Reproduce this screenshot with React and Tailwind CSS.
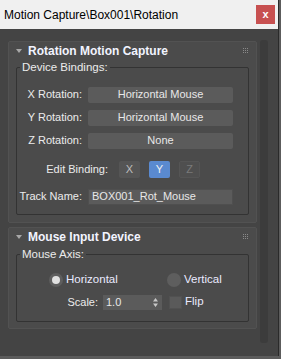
import React from 'react';

const Grip = () => (
  <svg width="6" height="6" viewBox="0 0 6 6" className="fill-[#8a8a8a]">
    <rect x="0" y="0" width="1" height="1" />
    <rect x="2" y="0" width="1" height="1" />
    <rect x="4" y="0" width="1" height="1" />
    <rect x="0" y="2" width="1" height="1" />
    <rect x="2" y="2" width="1" height="1" />
    <rect x="4" y="2" width="1" height="1" />
    <rect x="0" y="4" width="1" height="1" />
    <rect x="2" y="4" width="1" height="1" />
    <rect x="4" y="4" width="1" height="1" />
  </svg>
);

const RolloutHeader = ({ title }) => (
  <div className="flex items-center h-[17px] pl-[7px] pr-[7px]">
    <svg width="6" height="4" viewBox="0 0 6 4" className="fill-[#a8a8a8]">
      <path d="M0 0h6L3 4z" />
    </svg>
    <span className="ml-[6px] flex-1 font-bold text-[12px] text-[#f2f4ff] leading-none whitespace-nowrap">{title}</span>
    <Grip />
  </div>
);

const Row = ({ label, children }) => (
  <div className="flex items-center">
    <span className="w-[71px] text-right text-[#ececec] pr-[6px] whitespace-nowrap">{label}</span>
    {children}
  </div>
);

const Field = ({ children }) => (
  <div className="w-[145px] h-[16px] rounded-[2px] bg-[#5b5b5b] flex items-center justify-center text-[#e8e8e8]">
    {children}
  </div>
);

export default function App() {
  return (
    <div
      className="w-[281px] h-[359px] bg-[#5c5c5c] overflow-hidden text-[11px] leading-none"
      style={{ fontFamily: '"Liberation Sans", Arial, sans-serif' }}
    >
      <div className="w-[279px] h-[356px] bg-[#444444] border-r border-[#2a2a2a] flex flex-col">
        <div className="h-[29px] bg-[#f0f0f0] flex items-center justify-between pl-[4px] pr-[3px]">
          <span className="text-[12px] text-black whitespace-nowrap">Motion Capture\Box001\Rotation</span>
          <div className="w-[19px] h-[19px] bg-[#c75050] flex items-center justify-center text-white text-[11px] font-bold">x</div>
        </div>

        <div className="flex pt-[12px] pl-[8px]">
          <div className="w-[249px] flex flex-col gap-[4px]">
            <div className="h-[182px] bg-[#4b4b4b] rounded-[2px] border border-[#525252]">
              <RolloutHeader title="Rotation Motion Capture" />
              <fieldset className="mx-[7px] mt-[3px] h-[153px] border border-[#333333] rounded-[2px]">
                <legend className="ml-[3px] px-[2px] text-[#ececec] text-[11.5px]">Device Bindings:</legend>
                <div className="flex flex-col gap-[7px] pt-[13px]">
                  <Row label="X Rotation:"><Field>Horizontal Mouse</Field></Row>
                  <Row label="Y Rotation:"><Field>Horizontal Mouse</Field></Row>
                  <Row label="Z Rotation:"><Field>None</Field></Row>
                  <div className="flex items-center mt-[5px]">
                    <span className="w-[102px] text-right text-[#ececec] pr-[11px] whitespace-nowrap">Edit Binding:</span>
                    <div className="flex gap-[9px]">
                      <div className="w-[21px] h-[17px] rounded-[2px] bg-[#555555] flex items-center justify-center text-[#bdbdbd]">X</div>
                      <div className="w-[21px] h-[17px] rounded-[2px] bg-[#5a8ad0] flex items-center justify-center text-[#f0f0f0]">Y</div>
                      <div className="w-[21px] h-[17px] rounded-[2px] bg-[#4f4f4f] border border-[#555555] flex items-center justify-center text-[#7a7a7a]">Z</div>
                    </div>
                  </div>
                  <div className="flex items-center mt-[4px]">
                    <span className="w-[71px] text-right text-[#ececec] pr-[6px] whitespace-nowrap">Track Name:</span>
                    <div className="w-[145px] h-[16px] bg-[#5b5b5b] border border-[#4f4f4f] flex items-center pl-[3px] text-[#e8e8e8]">BOX001_Rot_Mouse</div>
                  </div>
                </div>
              </fieldset>
            </div>

            <div className="h-[102px] bg-[#4b4b4b] rounded-[2px] border border-[#525252]">
              <RolloutHeader title="Mouse Input Device" />
              <fieldset className="mx-[7px] mt-[4px] h-[73px] border border-[#333333] rounded-[2px]">
                <legend className="ml-[3px] px-[2px] text-[#ececec] text-[11.5px]">Mouse Axis:</legend>
                <div className="flex items-center pt-[12px]">
                  <div className="flex items-center ml-[32px] w-[118px]">
                    <div className="w-[14px] h-[14px] rounded-full bg-[#5e5e5e] flex items-center justify-center">
                      <div className="w-[8px] h-[8px] rounded-full bg-[#e0e0e0]" />
                    </div>
                    <span className="ml-[3px] text-[#eaeaff] text-[11.5px]">Horizontal</span>
                  </div>
                  <div className="w-[14px] h-[14px] rounded-full bg-[#5e5e5e]" />
                  <span className="ml-[3px] text-[#eaeaff] text-[11.5px]">Vertical</span>
                </div>
                <div className="flex items-center mt-[8px]">
                  <span className="w-[86px] text-right text-[#ececec] pr-[5px]">Scale:</span>
                  <div className="w-[59px] h-[15px] bg-[#5b5b5b] flex items-center justify-between pl-[3px] pr-[4px] text-[#e8e8e8]">
                    <span>1.0</span>
                    <svg width="5" height="9" viewBox="0 0 5 9" className="fill-[#c8c8c8]">
                      <path d="M0 3.5L2.5 0L5 3.5zM0 5.5L2.5 9L5 5.5z" />
                    </svg>
                  </div>
                  <div className="ml-[7px] w-[13px] h-[13px] bg-[#5a5a5a] border border-[#515151]" />
                  <span className="ml-[3px] text-[#eaeaff] text-[11.5px]">Flip</span>
                </div>
              </fieldset>
            </div>
          </div>
          <div className="ml-[3px] w-[8px] h-[303px] mt-[-1px] rounded-[3px] bg-[#3c3c3c]" />
        </div>
      </div>
    </div>
  );
}
